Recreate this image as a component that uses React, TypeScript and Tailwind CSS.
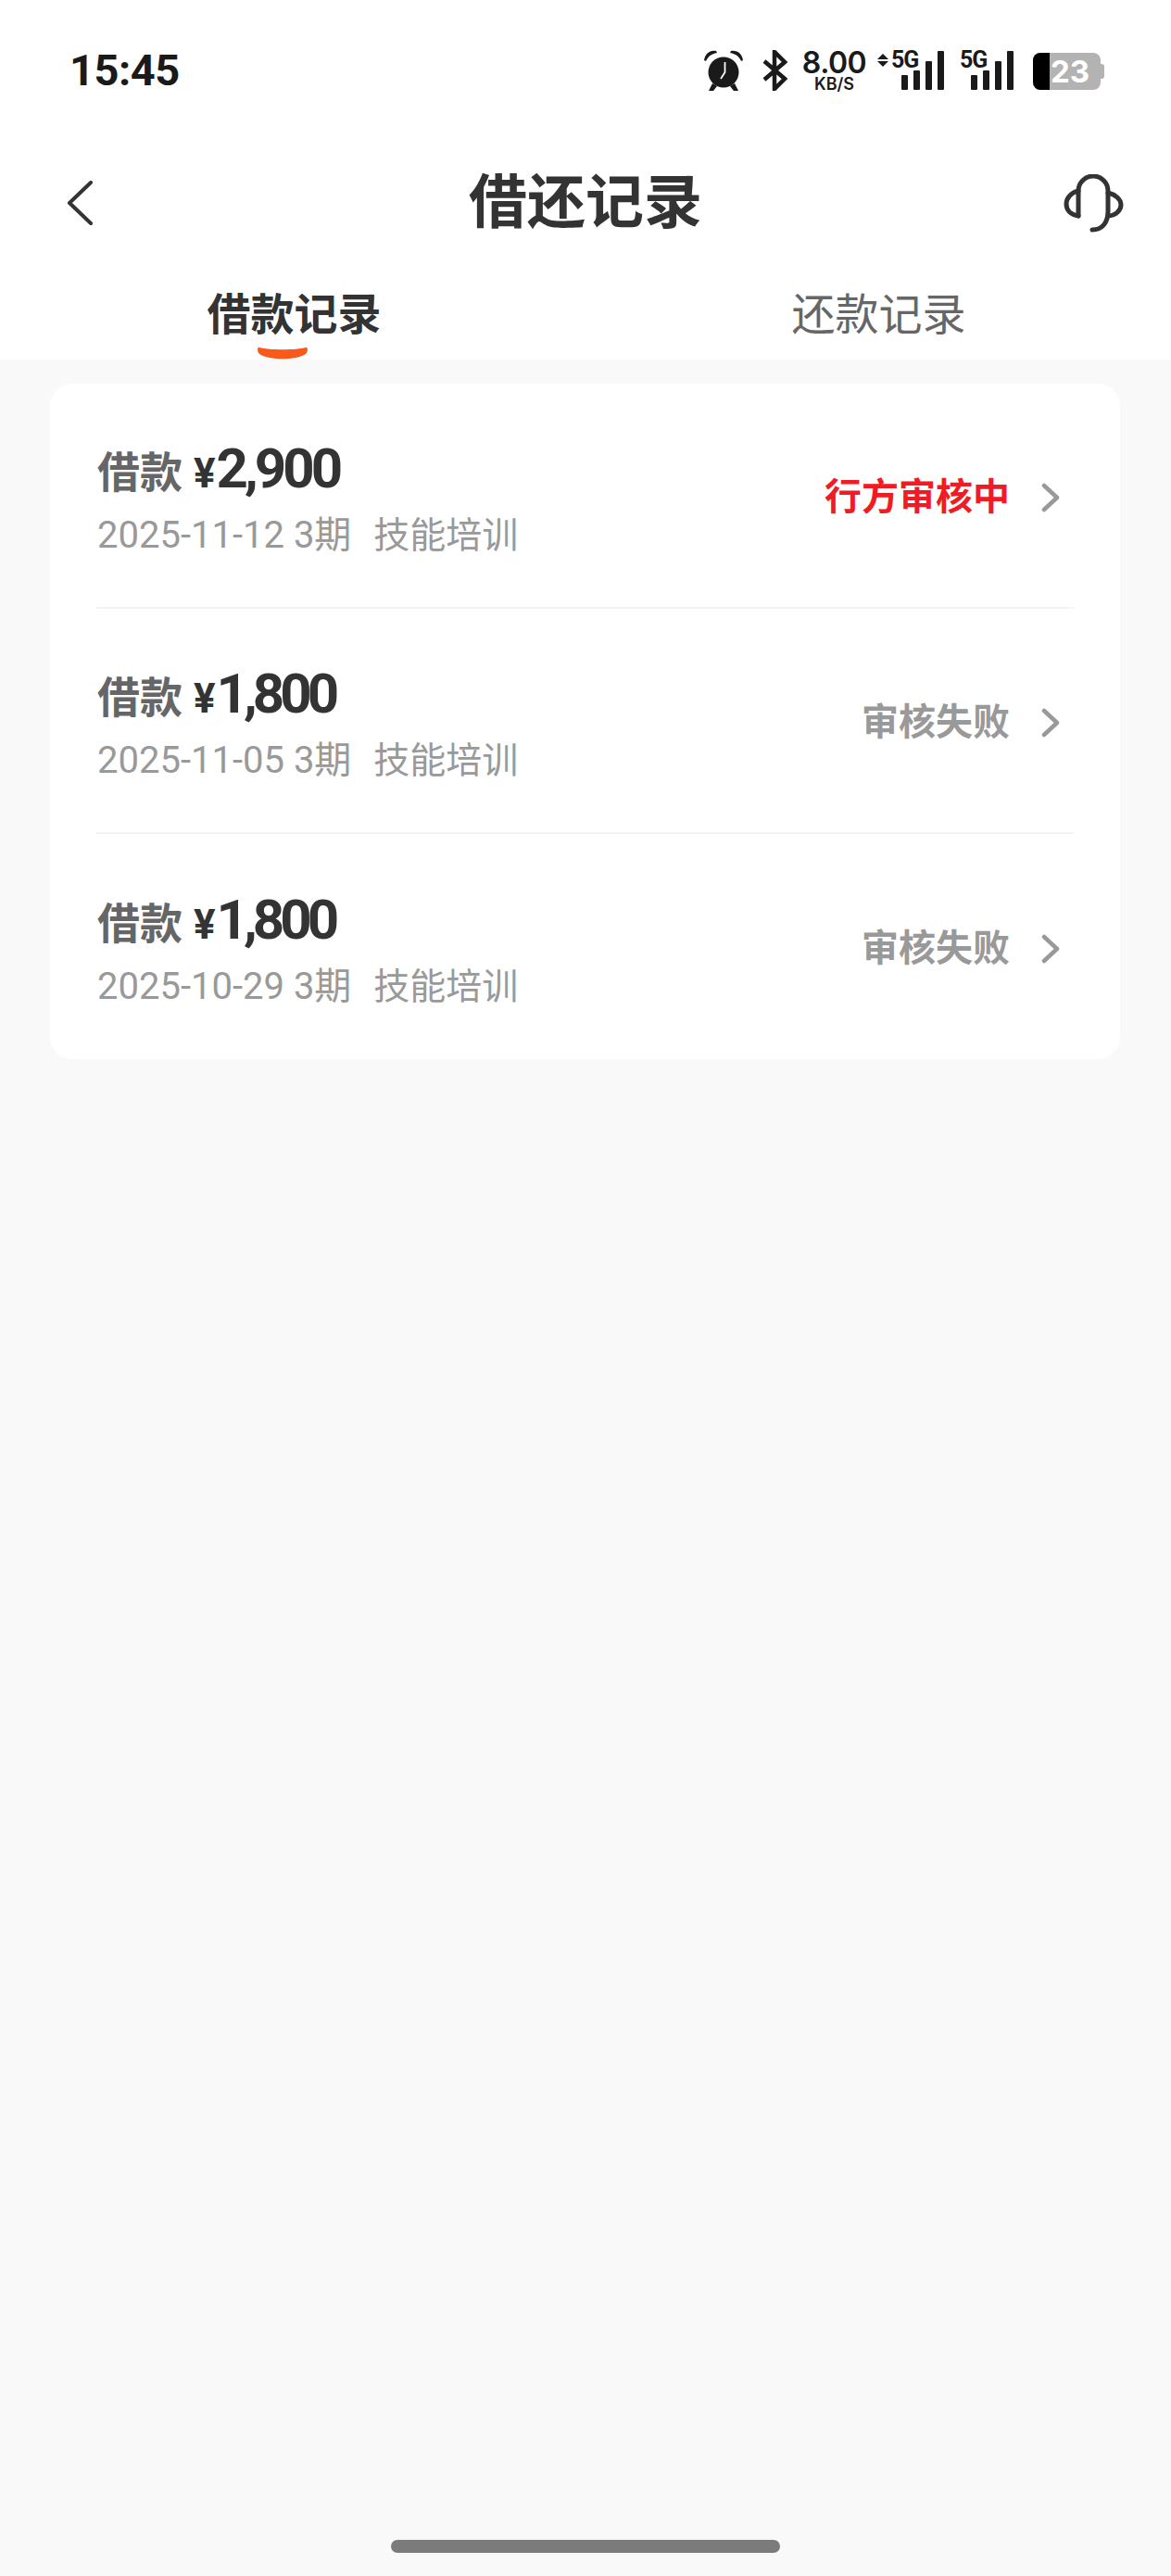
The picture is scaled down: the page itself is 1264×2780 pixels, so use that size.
const records = [
  { amount: '2,900', date: '2025-11-12', status: '行方审核中', pending: true },
  { amount: '1,800', date: '2025-11-05', status: '审核失败', pending: false },
  { amount: '1,800', date: '2025-10-29', status: '审核失败', pending: false },
];

function SignalBars() {
  return (
    <div className="flex items-end gap-[6px]">
      <div className="h-[16px] w-[7px] rounded-[1px] bg-[#1a1a1a]" />
      <div className="h-[21px] w-[7px] rounded-[1px] bg-[#1a1a1a]" />
      <div className="h-[31px] w-[7px] rounded-[1px] bg-[#1a1a1a]" />
      <div className="h-[42px] w-[7px] rounded-[1px] bg-[#1a1a1a]" />
    </div>
  );
}

function StatusBar() {
  return (
    <div className="flex h-[150px] items-start justify-between pl-[75px] pr-[72px] pt-[54px] font-['Inter','Roboto',sans-serif] text-[#1a1a1a]">
      <span className="font-['Roboto',sans-serif] text-[47px] font-bold leading-[44px] tracking-[-0.5px]">15:45</span>
      <div className="flex items-start">
        <svg width="42" height="44" viewBox="0 0 42 44" fill="#1a1a1a">
          <circle cx="21" cy="24" r="16.5" />
          <path d="M0 11 C1 4 6 0 13 1 L14 3 C8 4 4 7 2 12 Z M42 11 C41 4 36 0 29 1 L28 3 C34 4 38 7 40 12 Z" />
          <path d="M9 36 L5 44 H10 L14 39 Z M33 36 L37 44 H32 L28 39 Z" />
          <path d="M22.5 13 V24 L18 31" fill="none" stroke="#fff" strokeWidth="1.8" />
        </svg>
        <svg className="ml-[21px]" width="27" height="44" viewBox="0 0 27 44" fill="none" stroke="#1a1a1a" strokeWidth="4.5">
          <path d="M2 12 L24 31 L13 42 V2 L24 13 L2 32" />
        </svg>
        <div className="ml-[16px] flex w-[69px] flex-col items-center">
          <span className="text-[32px] font-semibold leading-[28px] tracking-[-0.5px]">8.00</span>
          <span className="text-[18px] font-semibold leading-[17px]">KB/S</span>
        </div>
        <div className="ml-[12px] mt-[3px] flex flex-col gap-[2px] pt-[1px]">
          <div className="h-0 w-0 border-x-[6px] border-b-[6px] border-x-transparent border-b-[#1a1a1a]" />
          <div className="h-0 w-0 border-x-[6px] border-t-[6px] border-x-transparent border-t-[#1a1a1a]" />
        </div>
        <div className="relative flex h-[43px] items-end">
          <span className="absolute left-[3px] top-0 font-['Roboto',sans-serif] text-[25px] font-bold leading-[22px] tracking-[-1px]">5G</span>
          <div className="ml-[14px]">
            <SignalBars />
          </div>
        </div>
        <div className="relative ml-[29px] flex h-[43px] items-end">
          <span className="absolute left-[-12px] top-0 font-['Roboto',sans-serif] text-[25px] font-bold leading-[22px] tracking-[-1px]">5G</span>
          <SignalBars />
        </div>
        <div className="ml-[21px] mt-[3px] flex h-[40px] items-center">
          <div className="flex h-[40px] w-[73px] overflow-hidden rounded-[8px] bg-[#b3b3b3]">
            <div className="h-full w-[18px] bg-black" />
            <span className="ml-[1px] text-[33px] font-bold leading-[40px] text-white">23</span>
          </div>
          <div className="h-[16px] w-[4px] rounded-r-[3px] bg-[#b3b3b3]" />
        </div>
      </div>
    </div>
  );
}

function Headset() {
  return (
    <svg width="65" height="63" viewBox="0 0 65 63" fill="none" stroke="#333" strokeWidth="5" strokeLinecap="round" strokeLinejoin="round">
      <path d="M16 45 V18 A16 16 0 0 1 48 18 V40 C48 52 42 60 31 60" />
      <path d="M16 18 C7 20 3 27 3 32 C3 39 8 44 16 45" />
      <path d="M48 20 C56 22 62 27 62 33 C62 39 56 45 48 45" />
    </svg>
  );
}

function RecordRow({ amount, date, status, pending, last }: { amount: string; date: string; status: string; pending: boolean; last: boolean }) {
  return (
    <div className={`mx-[50px] flex h-[243px] items-center justify-between ${last ? '' : 'border-b-2 border-[#f3f3f3]'}`}>
      <div className="pl-[1px] pt-[7px]">
        <div className="flex items-baseline leading-[60px]">
          <span className="text-[46px] font-bold text-[#666]">借款</span>
          <span className="ml-[12px] font-['Roboto',sans-serif] text-[44px] font-bold text-[#333]">¥</span>
          <span className={`ml-[1px] font-['Roboto',sans-serif] text-[60px] font-bold text-[#333] ${pending ? 'tracking-[-4px]' : 'tracking-[-5px]'}`}>{amount}</span>
        </div>
        <div className="mt-[15px] text-[40px] leading-[44px] text-[#999]">
          {date} 3期<span className="ml-[24px] text-[39px]">技能培训</span>
        </div>
      </div>
      <div className="mt-[4px] flex items-center">
        <span className="text-[40px] font-bold leading-[44px]" style={{ color: pending ? '#f01c24' : '#999' }}>{status}</span>
        <svg className="ml-[34px] mr-[15px]" width="20" height="32" viewBox="0 0 20 32" fill="none" stroke="#999" strokeWidth="4.5" strokeLinecap="round" strokeLinejoin="round">
          <path d="M3 3 L17 16 L3 29" />
        </svg>
      </div>
    </div>
  );
}

export default function App() {
  return (
    <div className="flex h-[2780px] w-[1264px] flex-col bg-[#f9f9f9] font-['Roboto','Noto_Sans_CJK_SC',sans-serif]">
      <div className="bg-white">
        <StatusBar />
        <div className="grid h-[138px] grid-cols-[1fr_auto_1fr] items-center pl-[72px] pr-[51px]">
          <svg width="28" height="48" viewBox="0 0 28 48" fill="none" stroke="#333" strokeWidth="4" strokeLinecap="round" strokeLinejoin="round">
            <path d="M26 2 L3 24 L26 46" />
          </svg>
          <h1 className="ml-[-21px] text-[63px] font-bold leading-[70px] text-[#333]">借还记录</h1>
          <div className="flex justify-end">
            <Headset />
          </div>
        </div>
        <div className="grid h-[100px] grid-cols-2 pl-[2px] text-[47px] leading-[46px]">
          <div className="flex flex-col items-center pt-[29px]">
            <span className="font-bold text-[#333]">借款记录</span>
            <svg className="mr-[26px] mt-[10px]" width="54" height="15" viewBox="0 0 54 15" fill="#f9591a">
              <path d="M2 2 C12 5 42 5 52 2 C54 1 55 6 52 9 C42 16 12 16 2 9 C-1 6 0 1 2 2 Z" />
            </svg>
          </div>
          <div className="flex flex-col items-center pt-[29px]">
            <span className="text-[#666]">还款记录</span>
          </div>
        </div>
      </div>
      <div className="mx-[54px] mt-[26px] w-[1155px] rounded-[24px] bg-white">
        {records.map((r, i) => (
          <RecordRow key={r.date} {...r} last={i === records.length - 1} />
        ))}
      </div>
      <div className="mx-auto mb-[25px] mt-auto h-[14px] w-[420px] rounded-full bg-[#7b7b7b]" />
    </div>
  );
}
